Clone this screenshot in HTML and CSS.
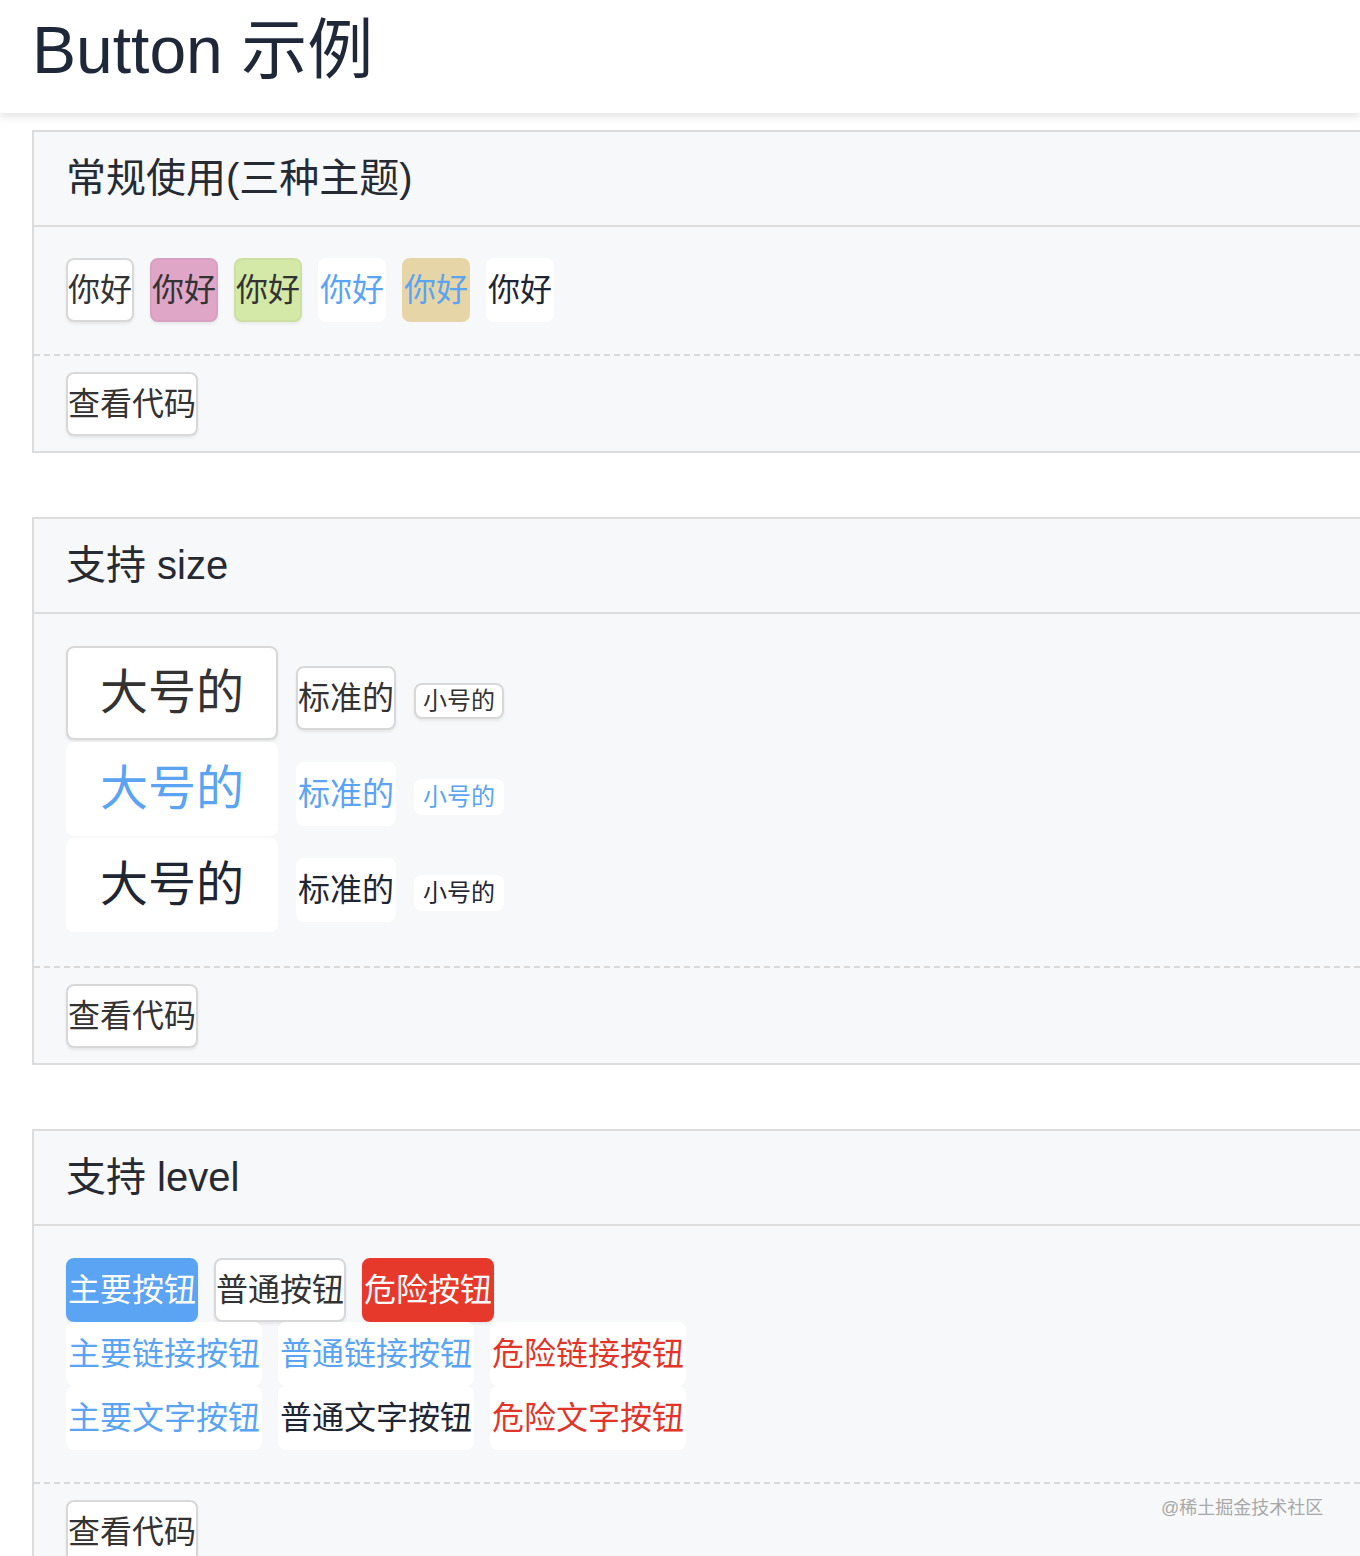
FILE: index.html
```html
<!DOCTYPE html>
<html lang="zh-CN">
<head>
<meta charset="utf-8">
<title>Button 示例</title>
<link rel="stylesheet" href="styles.css">
</head>
<body>
<header class="topbar">
  <h1 class="page-title">Button 示例</h1>
</header>
<main class="demos">
  <section class="card">
    <h2 class="card-title">常规使用(三种主题)</h2>
    <div class="card-body">
      <div class="row">
        <button class="btn">你好</button>
        <button class="btn btn-pink">你好</button>
        <button class="btn btn-green">你好</button>
        <button class="btn btn-bare is-blue">你好</button>
        <button class="btn btn-tan is-blue">你好</button>
        <button class="btn btn-bare is-dark">你好</button>
      </div>
    </div>
    <div class="card-foot"><button class="btn">查看代码</button></div>
  </section>

  <section class="card">
    <h2 class="card-title">支持 size</h2>
    <div class="card-body body-size">
      <div class="row row-size">
        <button class="btn btn-lg">大号的</button>
        <button class="btn">标准的</button>
        <button class="btn btn-sm">小号的</button>
      </div>
      <div class="row row-size">
        <button class="btn btn-lg btn-bare is-blue">大号的</button>
        <button class="btn btn-bare is-blue">标准的</button>
        <button class="btn btn-sm btn-bare is-blue">小号的</button>
      </div>
      <div class="row row-size">
        <button class="btn btn-lg btn-bare is-dark">大号的</button>
        <button class="btn btn-bare is-dark">标准的</button>
        <button class="btn btn-sm btn-bare is-dark">小号的</button>
      </div>
    </div>
    <div class="card-foot"><button class="btn">查看代码</button></div>
  </section>

  <section class="card">
    <h2 class="card-title">支持 level</h2>
    <div class="card-body body-level">
      <div class="row">
        <button class="btn btn-primary">主要按钮</button>
        <button class="btn">普通按钮</button>
        <button class="btn btn-danger">危险按钮</button>
      </div>
      <div class="row row-wide">
        <button class="btn btn-bare is-blue">主要链接按钮</button>
        <button class="btn btn-bare is-blue">普通链接按钮</button>
        <button class="btn btn-bare is-red">危险链接按钮</button>
      </div>
      <div class="row row-wide">
        <button class="btn btn-bare is-blue">主要文字按钮</button>
        <button class="btn btn-bare is-dark">普通文字按钮</button>
        <button class="btn btn-bare is-red">危险文字按钮</button>
      </div>
    </div>
    <div class="card-foot"><button class="btn">查看代码</button></div>
  </section>
</main>
<div class="watermark">@稀土掘金技术社区</div>
</body>
</html>
```

FILE: styles.css
```css
* { box-sizing: border-box; }

html, body {
  margin: 0;
  padding: 0;
}

body {
  background: #ffffff;
  font-family: "Liberation Sans", "Noto Sans CJK SC", sans-serif;
  color: #333;
  overflow: hidden;
  width: 1360px;
  height: 1556px;
  position: relative;
}

.topbar {
  height: 113px;
  background: #fff;
  padding: 17px 32px 0;
  box-shadow: 0 4px 9px rgba(0, 0, 0, 0.11);
  position: relative;
  z-index: 1;
}

.page-title {
  margin: 0;
  font-size: 66px;
  line-height: 66px;
  font-weight: 400;
  color: #1f2838;
}

.demos {
  padding: 17px 0 0 32px;
}

.card {
  width: 1400px;
  border: 2px solid #dcdcdc;
  background: #f7f8f9;
  margin-bottom: 64px;
}

.card-title {
  margin: 0;
  padding: 0 32px;
  height: 95px;
  line-height: 93px;
  font-size: 40px;
  font-weight: 400;
  color: #262b33;
  border-bottom: 2px solid #dcdcdc;
}

.card-body {
  padding: 31px 32px 32px;
  border-bottom: 2px dashed #d9d9d9;
}

.body-size {
  padding: 32px 32px 34px;
}

.body-level {
  padding: 32px 32px 32px;
}

.card-foot {
  padding: 16px 32px 15px;
}

.row {
  display: flex;
  align-items: center;
  gap: 16px;
}

.row-size {
  align-items: baseline;
  gap: 18px;
}

.row-size + .row-size {
  margin-top: 2px;
}

.row-wide {
  gap: 16px;
}

.btn {
  font-family: inherit;
  font-size: 32px;
  line-height: 48px;
  padding: 6px 0;
  margin: 0;
  border: 2px solid #d8d8d8;
  border-radius: 8px;
  background: #fff;
  color: #333;
  box-shadow: 0 2px 3px rgba(0, 0, 0, 0.07);
  cursor: pointer;
}

.btn-pink {
  background: #dfa6c8;
  border-color: #d8a1c1;
}

.btn-green {
  background: #d4e8a7;
  border-color: #cde0a2;
}

.btn-tan {
  background: #e6d6a7;
  border-color: #e6d6a7;
  box-shadow: none;
}

.btn-bare {
  background: #fff;
  border-color: #fff;
  box-shadow: none;
}

.btn-primary {
  background: #5aa4f3;
  border-color: #5aa4f3;
  color: #fff;
}

.btn-danger {
  background: #e7392b;
  border-color: #e7392b;
  color: #fff;
}

.is-blue { color: #5aa4f3; }
.is-red { color: #e2352a; }
.is-dark { color: #1f2633; }

.btn-lg {
  font-size: 48px;
  line-height: 72px;
  padding: 9px 32px;
}

.btn-sm {
  font-size: 24px;
  line-height: 32px;
  padding: 0 7px;
}

.watermark {
  position: absolute;
  left: 1161px;
  top: 1496px;
  font-size: 18px;
  line-height: 24px;
  color: #a8a8a8;
}
```
